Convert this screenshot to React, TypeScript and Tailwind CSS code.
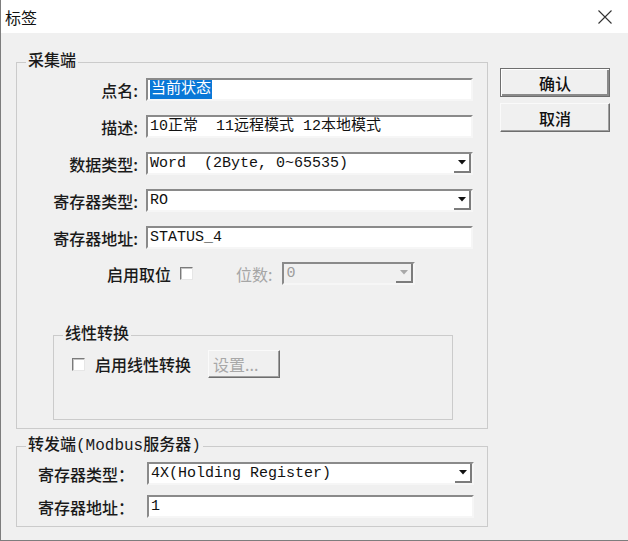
import React from 'react';

const cjk = "font-['Noto_Sans_CJK_SC',sans-serif]";
const mono = "font-['Liberation_Mono','Noto_Sans_CJK_SC',monospace]";
const sunken =
  'border-2 border-t-[#8a8a8a] border-l-[#8a8a8a] border-r-[#f6f6f6] border-b-[#f6f6f6]';

const TextBox: React.FC<{ children: React.ReactNode }> = ({ children }) => (
  <div
    className={`h-[23px] ${sunken} bg-white flex items-center pl-[2px] pt-[1px] text-[15px] ${mono} text-[#111] whitespace-pre overflow-hidden`}
  >
    {children}
  </div>
);

const Combo: React.FC<{ value: string; disabled?: boolean; className?: string }> = ({
  value,
  disabled,
  className = '',
}) => (
  <div
    className={`h-[23px] ${sunken} flex items-stretch text-[15px] ${mono} ${
      disabled ? 'bg-[#f0f0f0] text-[#9c9c9c]' : 'bg-white text-[#111]'
    } ${className}`}
  >
    <span className="flex-1 flex items-center pl-[2px] pt-[1px] whitespace-pre">{value}</span>
    <span className="w-[17px] flex items-center justify-center border-r-2 border-b-2 border-r-[#7c7c7c] border-b-[#7c7c7c]">
      <svg width="8" height="5" viewBox="0 0 8 5">
        <path d="M0 0h8L4 4.5z" fill={disabled ? '#a8a8a8' : '#111'} />
      </svg>
    </span>
  </div>
);

const CheckBox: React.FC = () => (
  <span className="w-[13px] h-[13px] bg-white border border-t-[#7a7a7a] border-l-[#7a7a7a] border-r-[#e6e6e6] border-b-[#e6e6e6] shadow-[inset_1px_1px_0_#c4c4c4]" />
);

const Group: React.FC<{ title: string; className?: string; children: React.ReactNode }> = ({
  title,
  className = '',
  children,
}) => (
  <fieldset className={`m-0 p-0 border border-[#cbcbcb] ${className}`}>
    <legend className={`ml-[9px] px-[2px] leading-[20px] text-[16px] font-medium text-[#1a1a1a] ${mono}`}>
      {title}
    </legend>
    {children}
  </fieldset>
);

const DlgButton: React.FC<{ label: string; isDefault?: boolean }> = ({ label, isDefault }) => (
  <button
    className={`w-[110px] h-[29px] bg-[#f0f0f0] text-[16px] font-medium text-[#111] ${cjk} border ${
      isDefault
        ? 'border-[#6e6e6e] shadow-[inset_1px_1px_0_#ffffff,inset_-2px_-2px_0_#8a8a8a]'
        : 'border-t-[#fafafa] border-l-[#fafafa] border-r-[#6e6e6e] border-b-[#6e6e6e] shadow-[inset_-1px_-1px_0_#a0a0a0]'
    }`}
  >
    {label}
  </button>
);

const labelCls = `text-right text-[16px] font-medium text-[#1a1a1a] ${cjk} leading-none`;

export default function App() {
  return (
    <div className="w-[628px] h-[541px] bg-[#f0f0f0] border-l border-b border-[#7d7d7d] flex flex-col overflow-hidden">
      {/* Title bar */}
      <div className="h-[33px] shrink-0 bg-white flex items-center justify-between pl-[4px] pr-[16px]">
        <span className={`text-[16px] text-[#111] ${cjk}`}>标签</span>
        <svg width="14" height="14" viewBox="0 0 14 14">
          <path d="M0.5 0.5L13.5 13.5M13.5 0.5L0.5 13.5" stroke="#333" strokeWidth="1.1" />
        </svg>
      </div>

      <div className="flex pl-[15px] pt-[19px] gap-[12px]">
        <div className="w-[472px] flex flex-col gap-[7px]">
          {/* 采集端 */}
          <Group title="采集端" className="h-[377px]">
            <div className="grid grid-cols-[121px_327px] gap-x-[8px] gap-y-[14px] items-center pt-[6px]">
              <span className={labelCls}>点名:</span>
              <TextBox>
                <span className="bg-[#0a78d7] text-white px-[1px]">当前状态</span>
              </TextBox>

              <span className={labelCls}>描述:</span>
              <TextBox>10正常  11远程模式 12本地模式</TextBox>

              <span className={labelCls}>数据类型:</span>
              <Combo value="Word  (2Byte, 0~65535)" />

              <span className={labelCls}>寄存器类型:</span>
              <Combo value="RO" />

              <span className={labelCls}>寄存器地址:</span>
              <TextBox>STATUS_4</TextBox>
            </div>

            <div className="flex items-center h-[23px] mt-[13px] pl-[90px]">
              <span className={`text-[16px] font-medium text-[#1a1a1a] ${cjk} leading-none`}>启用取位</span>
              <span className="ml-[9px] flex">
                <CheckBox />
              </span>
              <span className={`ml-[43px] text-[16px] text-[#a6a6a6] ${cjk} leading-none`}>位数:</span>
              <Combo value="0" disabled className="ml-[10px] w-[133px]" />
            </div>

            {/* 线性转换 */}
            <Group title="线性转换" className="mt-[40px] ml-[36px] w-[400px] h-[95px]">
              <div className="flex items-center pt-[5px] pl-[18px]">
                <CheckBox />
                <span className={`ml-[10px] text-[16px] font-medium text-[#1a1a1a] ${cjk} leading-none`}>
                  启用线性转换
                </span>
                <button
                  className={`ml-[17px] w-[72px] h-[28px] bg-[#f0f0f0] text-[16px] text-[#a8a8a8] ${cjk} border border-t-[#fafafa] border-l-[#fafafa] border-r-[#6e6e6e] border-b-[#6e6e6e] shadow-[inset_-1px_-1px_0_#a0a0a0] text-left pl-[4px]`}
                >
                  设置...
                </button>
              </div>
            </Group>
          </Group>

          {/* 转发端 */}
          <Group title="转发端(Modbus服务器)" className="h-[91px]">
            <div className="grid grid-cols-[100px_327px] gap-x-[9px] gap-y-[10px] items-center pt-[6px] pl-[21px]">
              <span className={`text-[16px] font-medium text-[#1a1a1a] ${cjk} leading-none`}>寄存器类型：</span>
              <Combo value="4X(Holding Register)" />
              <span className={`text-[16px] font-medium text-[#1a1a1a] ${cjk} leading-none`}>寄存器地址：</span>
              <TextBox>1</TextBox>
            </div>
          </Group>
        </div>

        {/* Buttons */}
        <div className="flex flex-col gap-[6px] mt-[16px]">
          <DlgButton label="确认" isDefault />
          <DlgButton label="取消" />
        </div>
      </div>
    </div>
  );
}
